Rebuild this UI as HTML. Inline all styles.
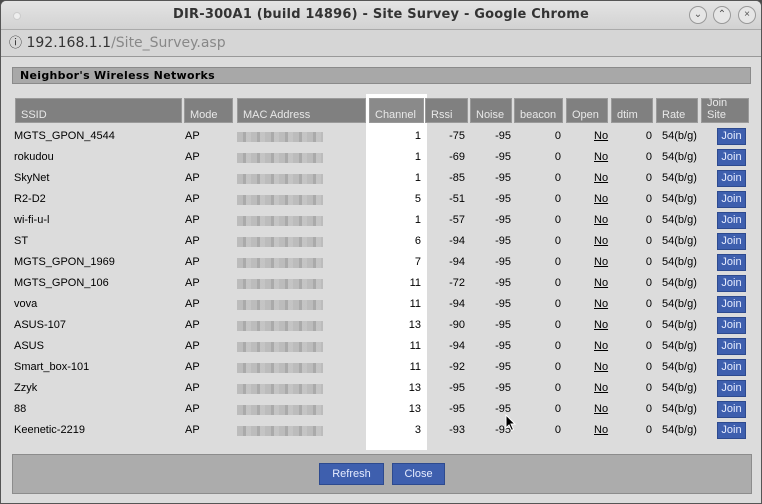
<!DOCTYPE html>
<html><head><style>
body{margin:0;width:762px;height:504px;overflow:hidden;background:#4a4a4a;font-family:"Liberation Sans",sans-serif;}
.win{position:absolute;left:0;top:0;width:760px;height:502px;border:1px solid #555;border-radius:6px 6px 0 0;background:#dcdcdc;overflow:hidden}
.title{position:absolute;left:0;top:0;width:760px;height:28px;background:linear-gradient(#e4e4e4,#d2d2d2);border-bottom:1px solid #aaa;font:bold 13px "DejaVu Sans",sans-serif;color:#333;text-align:center;line-height:28px;letter-spacing:0.2px}
.addr{position:absolute;left:0;top:29px;width:760px;height:26px;background:#d6d6d6;border-bottom:1px solid #999;font:14px "DejaVu Sans",sans-serif;color:#333;line-height:26px}
.wb{position:absolute;top:5px;width:16px;height:16px;border:1px solid #999;border-radius:50%;font-size:10px;line-height:16px;text-align:center;color:#555;background:#e6e6e6}
.a{position:absolute;font-size:11px;color:#000;line-height:21px;white-space:nowrap}
.r{text-align:right}
.h{position:absolute;top:97px;height:25px;background:#808080;border:1px solid #9a9a9a;color:#e8e8e8;font-size:11px;box-sizing:border-box;padding-left:5px}
.h span{position:absolute;bottom:1px;left:5px;line-height:12px}
.m{position:absolute;width:86px;height:10px;background:repeating-linear-gradient(90deg,#b8b8b8 0 6px,#a4a4a4 6px 9px,#c2c2c2 9px 14px);opacity:.9}
.j{position:absolute;left:716px;width:29px;height:17px;background:#3e5fae;border:1px solid #2d4a8f;box-sizing:border-box;color:#e6ecff;font-size:11px;text-align:center;line-height:15px}
.u{text-decoration:underline}
</style></head><body><div class="win">
<div class="title">DIR-300A1 (build 14896) - Site Survey - Google Chrome</div>
<div style="position:absolute;left:12px;top:11px;width:6px;height:6px;border-radius:50%;background:#eee;border:1px solid #ccc"></div>
<div class="wb" style="left:688px">&#8964;</div><div class="wb" style="left:712px">&#8963;</div><div class="wb" style="left:737px">×</div>
<div class="addr"><span style="margin-left:8px;font-size:13px">ⓘ</span> 192.168.1.1<span style="color:#888">/Site_Survey.asp</span></div>
<div style="position:absolute;left:11px;top:66px;width:739px;height:17px;background:#a8a8a8;border:1px solid #8a8a8a;box-sizing:border-box;font:bold 11px 'DejaVu Sans',sans-serif;line-height:15px;padding-left:7px;letter-spacing:.3px">Neighbor's Wireless Networks</div>
<div style="position:absolute;left:365px;top:93px;width:61px;height:356px;background:#fff"></div>
<div class="h" style="left:14px;width:167px"><span>SSID</span></div>
<div class="h" style="left:183px;width:49px"><span>Mode</span></div>
<div class="h" style="left:236px;width:129px"><span>MAC Address</span></div>
<div class="h" style="left:368px;width:55px;background:#8a8a8a"><span>Channel</span></div>
<div class="h" style="left:424px;width:43px"><span>Rssi</span></div>
<div class="h" style="left:469px;width:42px"><span>Noise</span></div>
<div class="h" style="left:513px;width:49px"><span>beacon</span></div>
<div class="h" style="left:565px;width:42px"><span>Open</span></div>
<div class="h" style="left:610px;width:42px"><span>dtim</span></div>
<div class="h" style="left:655px;width:42px"><span>Rate</span></div>
<div class="h" style="left:700px;width:48px"><span>Join<br>Site</span></div>

<div style="position:absolute;left:0;top:125px">
<div style="position:absolute;top:0px"><div class="a" style="left:13px">MGTS_GPON_4544</div><div class="a" style="left:184px">AP</div><div class="m" style="left:236px;top:6px"></div><div class="a r" style="left:380px;width:40px">1</div><div class="a r" style="left:424px;width:40px">-75</div><div class="a r" style="left:470px;width:40px">-95</div><div class="a r" style="left:520px;width:40px">0</div><div class="a u" style="left:593px">No</div><div class="a r" style="left:611px;width:40px">0</div><div class="a" style="left:661px">54(b/g)</div><div class="j" style="top:2px">Join</div></div>
<div style="position:absolute;top:21px"><div class="a" style="left:13px">rokudou</div><div class="a" style="left:184px">AP</div><div class="m" style="left:236px;top:6px"></div><div class="a r" style="left:380px;width:40px">1</div><div class="a r" style="left:424px;width:40px">-69</div><div class="a r" style="left:470px;width:40px">-95</div><div class="a r" style="left:520px;width:40px">0</div><div class="a u" style="left:593px">No</div><div class="a r" style="left:611px;width:40px">0</div><div class="a" style="left:661px">54(b/g)</div><div class="j" style="top:2px">Join</div></div>
<div style="position:absolute;top:42px"><div class="a" style="left:13px">SkyNet</div><div class="a" style="left:184px">AP</div><div class="m" style="left:236px;top:6px"></div><div class="a r" style="left:380px;width:40px">1</div><div class="a r" style="left:424px;width:40px">-85</div><div class="a r" style="left:470px;width:40px">-95</div><div class="a r" style="left:520px;width:40px">0</div><div class="a u" style="left:593px">No</div><div class="a r" style="left:611px;width:40px">0</div><div class="a" style="left:661px">54(b/g)</div><div class="j" style="top:2px">Join</div></div>
<div style="position:absolute;top:63px"><div class="a" style="left:13px">R2-D2</div><div class="a" style="left:184px">AP</div><div class="m" style="left:236px;top:6px"></div><div class="a r" style="left:380px;width:40px">5</div><div class="a r" style="left:424px;width:40px">-51</div><div class="a r" style="left:470px;width:40px">-95</div><div class="a r" style="left:520px;width:40px">0</div><div class="a u" style="left:593px">No</div><div class="a r" style="left:611px;width:40px">0</div><div class="a" style="left:661px">54(b/g)</div><div class="j" style="top:2px">Join</div></div>
<div style="position:absolute;top:84px"><div class="a" style="left:13px">wi-fi-u-l</div><div class="a" style="left:184px">AP</div><div class="m" style="left:236px;top:6px"></div><div class="a r" style="left:380px;width:40px">1</div><div class="a r" style="left:424px;width:40px">-57</div><div class="a r" style="left:470px;width:40px">-95</div><div class="a r" style="left:520px;width:40px">0</div><div class="a u" style="left:593px">No</div><div class="a r" style="left:611px;width:40px">0</div><div class="a" style="left:661px">54(b/g)</div><div class="j" style="top:2px">Join</div></div>
<div style="position:absolute;top:105px"><div class="a" style="left:13px">ST</div><div class="a" style="left:184px">AP</div><div class="m" style="left:236px;top:6px"></div><div class="a r" style="left:380px;width:40px">6</div><div class="a r" style="left:424px;width:40px">-94</div><div class="a r" style="left:470px;width:40px">-95</div><div class="a r" style="left:520px;width:40px">0</div><div class="a u" style="left:593px">No</div><div class="a r" style="left:611px;width:40px">0</div><div class="a" style="left:661px">54(b/g)</div><div class="j" style="top:2px">Join</div></div>
<div style="position:absolute;top:126px"><div class="a" style="left:13px">MGTS_GPON_1969</div><div class="a" style="left:184px">AP</div><div class="m" style="left:236px;top:6px"></div><div class="a r" style="left:380px;width:40px">7</div><div class="a r" style="left:424px;width:40px">-94</div><div class="a r" style="left:470px;width:40px">-95</div><div class="a r" style="left:520px;width:40px">0</div><div class="a u" style="left:593px">No</div><div class="a r" style="left:611px;width:40px">0</div><div class="a" style="left:661px">54(b/g)</div><div class="j" style="top:2px">Join</div></div>
<div style="position:absolute;top:147px"><div class="a" style="left:13px">MGTS_GPON_106</div><div class="a" style="left:184px">AP</div><div class="m" style="left:236px;top:6px"></div><div class="a r" style="left:380px;width:40px">11</div><div class="a r" style="left:424px;width:40px">-72</div><div class="a r" style="left:470px;width:40px">-95</div><div class="a r" style="left:520px;width:40px">0</div><div class="a u" style="left:593px">No</div><div class="a r" style="left:611px;width:40px">0</div><div class="a" style="left:661px">54(b/g)</div><div class="j" style="top:2px">Join</div></div>
<div style="position:absolute;top:168px"><div class="a" style="left:13px">vova</div><div class="a" style="left:184px">AP</div><div class="m" style="left:236px;top:6px"></div><div class="a r" style="left:380px;width:40px">11</div><div class="a r" style="left:424px;width:40px">-94</div><div class="a r" style="left:470px;width:40px">-95</div><div class="a r" style="left:520px;width:40px">0</div><div class="a u" style="left:593px">No</div><div class="a r" style="left:611px;width:40px">0</div><div class="a" style="left:661px">54(b/g)</div><div class="j" style="top:2px">Join</div></div>
<div style="position:absolute;top:189px"><div class="a" style="left:13px">ASUS-107</div><div class="a" style="left:184px">AP</div><div class="m" style="left:236px;top:6px"></div><div class="a r" style="left:380px;width:40px">13</div><div class="a r" style="left:424px;width:40px">-90</div><div class="a r" style="left:470px;width:40px">-95</div><div class="a r" style="left:520px;width:40px">0</div><div class="a u" style="left:593px">No</div><div class="a r" style="left:611px;width:40px">0</div><div class="a" style="left:661px">54(b/g)</div><div class="j" style="top:2px">Join</div></div>
<div style="position:absolute;top:210px"><div class="a" style="left:13px">ASUS</div><div class="a" style="left:184px">AP</div><div class="m" style="left:236px;top:6px"></div><div class="a r" style="left:380px;width:40px">11</div><div class="a r" style="left:424px;width:40px">-94</div><div class="a r" style="left:470px;width:40px">-95</div><div class="a r" style="left:520px;width:40px">0</div><div class="a u" style="left:593px">No</div><div class="a r" style="left:611px;width:40px">0</div><div class="a" style="left:661px">54(b/g)</div><div class="j" style="top:2px">Join</div></div>
<div style="position:absolute;top:231px"><div class="a" style="left:13px">Smart_box-101</div><div class="a" style="left:184px">AP</div><div class="m" style="left:236px;top:6px"></div><div class="a r" style="left:380px;width:40px">11</div><div class="a r" style="left:424px;width:40px">-92</div><div class="a r" style="left:470px;width:40px">-95</div><div class="a r" style="left:520px;width:40px">0</div><div class="a u" style="left:593px">No</div><div class="a r" style="left:611px;width:40px">0</div><div class="a" style="left:661px">54(b/g)</div><div class="j" style="top:2px">Join</div></div>
<div style="position:absolute;top:252px"><div class="a" style="left:13px">Zzyk</div><div class="a" style="left:184px">AP</div><div class="m" style="left:236px;top:6px"></div><div class="a r" style="left:380px;width:40px">13</div><div class="a r" style="left:424px;width:40px">-95</div><div class="a r" style="left:470px;width:40px">-95</div><div class="a r" style="left:520px;width:40px">0</div><div class="a u" style="left:593px">No</div><div class="a r" style="left:611px;width:40px">0</div><div class="a" style="left:661px">54(b/g)</div><div class="j" style="top:2px">Join</div></div>
<div style="position:absolute;top:273px"><div class="a" style="left:13px">88</div><div class="a" style="left:184px">AP</div><div class="m" style="left:236px;top:6px"></div><div class="a r" style="left:380px;width:40px">13</div><div class="a r" style="left:424px;width:40px">-95</div><div class="a r" style="left:470px;width:40px">-95</div><div class="a r" style="left:520px;width:40px">0</div><div class="a u" style="left:593px">No</div><div class="a r" style="left:611px;width:40px">0</div><div class="a" style="left:661px">54(b/g)</div><div class="j" style="top:2px">Join</div></div>
<div style="position:absolute;top:294px"><div class="a" style="left:13px">Keenetic-2219</div><div class="a" style="left:184px">AP</div><div class="m" style="left:236px;top:6px"></div><div class="a r" style="left:380px;width:40px">3</div><div class="a r" style="left:424px;width:40px">-93</div><div class="a r" style="left:470px;width:40px">-95</div><div class="a r" style="left:520px;width:40px">0</div><div class="a u" style="left:593px">No</div><div class="a r" style="left:611px;width:40px">0</div><div class="a" style="left:661px">54(b/g)</div><div class="j" style="top:2px">Join</div></div>
</div>
<svg style="position:absolute;left:504px;top:413px" width="12" height="18" viewBox="0 0 12 18"><path d="M1 1 L1 14 L4 11 L6.5 16.5 L8.5 15.5 L6 10 L10 10 Z" fill="#000" stroke="#fff" stroke-width="1"/></svg>
<div style="position:absolute;left:11px;top:453px;width:740px;height:40px;background:#acacac;border:1px solid #8c8c8c;box-sizing:border-box"></div>
<div class="j" style="left:318px;top:462px;width:65px;height:22px;line-height:20px">Refresh</div>
<div class="j" style="left:391px;top:462px;width:53px;height:22px;line-height:20px">Close</div>
</div></body></html>
